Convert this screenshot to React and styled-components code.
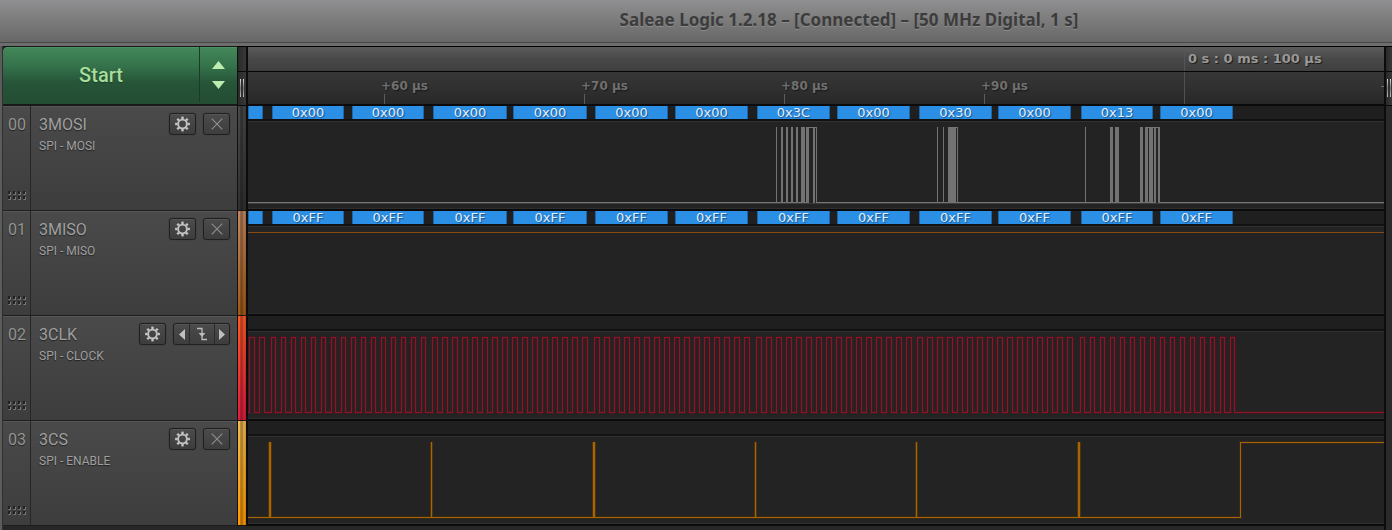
import React from 'react';
import styled, { createGlobalStyle } from 'styled-components';

const GlobalStyle = createGlobalStyle`
  * { box-sizing: border-box; }
  body { margin: 0; background: #272727; }
  button { margin: 0; padding: 0; border: 0; font: inherit; color: inherit; cursor: pointer; }
`;

const Window = styled.div`
  min-height: 100vh;
  display: flex;
  flex-direction: column;
  background: #272727;
  font-family: Roboto, "Liberation Sans", sans-serif;
`;

const TitleBar = styled.header`
  height: 43px;
  padding: 0 0 2px 306px;
  display: flex;
  align-items: center;
  justify-content: center;
  background: linear-gradient(#8f8f91, #676767);
  border-bottom: 1px solid #484848;
`;

const Title = styled.h1`
  margin: 0;
  font: 700 17px/24px "Noto Sans", "Open Sans", sans-serif;
  color: #3c3c3c;
  text-shadow: 0 1px 0 #8c8c8c;
  white-space: nowrap;
`;

const Workspace = styled.main`
  flex: 1;
  display: flex;
  align-items: flex-start;
  border-top: 3px solid #6e6e6e;
`;

const LeftEdge = styled.div`
  width: 3px;
  align-self: stretch;
  background: #5c5c5c;
  border-right: 1px solid #303030;
`;

const Sidebar = styled.section`
  width: 235px;
  flex: none;
  border-top: 1px solid #161616;
  border-right: 1px solid #101010;
`;

const StartBar = styled.div`
  height: 59px;
  padding-bottom: 2px;
  display: flex;
  border-radius: 5px 0 0 0;
  border-bottom: 2px solid #181818;
  overflow: hidden;
  background: linear-gradient(#43885a 0, #34714a 35%, #265538 62%, #244d34 100%);
  box-shadow: inset 0 1px 0 #4f9466;
`;

const StartButton = styled.button`
  flex: 1;
  background: none;
  && {
    border-right: 1px solid #1b3a27;
    color: #a8dc9a;
    font: 500 20px/24px Roboto, sans-serif;
  }
  text-shadow: 0 1px 1px #1c3f2a;
`;

const DurationStepper = styled.div`
  width: 37px;
  display: flex;
  flex-direction: column;
  align-items: center;
  justify-content: center;
`;

const StepButton = styled.button`
  width: 100%;
  height: 20px;
  background: none;
  display: flex;
  align-items: center;
  justify-content: center;
`;

const ChannelRow = styled.article`
  height: 105px;
  display: flex;
  background: linear-gradient(#4a4a4a, #3d3d3d);
  border-bottom: 1px solid #1e1e1e;
  box-shadow: inset 0 1px 0 #575757;
  text-shadow: 0 1px 1px #222;
`;

const IndexColumn = styled.div`
  width: 28px;
  padding: 9px 0 9px 1px;
  display: flex;
  flex-direction: column;
  align-items: center;
  justify-content: space-between;
  border-right: 1px solid #262626;
  color: #949494;
  font-size: 16px;
  line-height: 20px;
`;

const ChannelBody = styled.div`
  flex: 1;
  padding: 7px 7px 0 8px;
  display: flex;
  justify-content: space-between;
  align-items: flex-start;
`;

const ChannelName = styled.h2`
  margin: 2px 0 3px;
  font-size: 16px;
  line-height: 20px;
  font-weight: 400;
  color: #a0a0a0;
`;

const ChannelRole = styled.p`
  margin: 0;
  font-size: 12px;
  line-height: 16px;
  color: #a0a0a0;
  white-space: nowrap;
`;

const Controls = styled.div`
  display: flex;
  gap: 7px;
`;

const bevel = `
  border: 1px solid #202020;
  border-radius: 3px;
  background: linear-gradient(#4b4b4b, #3d3d3d);
  box-shadow: inset 0 1px 0 #555, 0 0 1px #202020;
`;

const IconButton = styled.button`
  width: 27px;
  height: 22px;
  display: flex;
  align-items: center;
  justify-content: center;
  && { ${bevel} }
`;

const TriggerGroup = styled.div`
  width: 57px;
  height: 22px;
  display: flex;
  overflow: hidden;
  ${bevel}
`;

const TriggerButton = styled.button`
  flex: ${(p) => (p.$wide ? '1' : '0 0 15px')};
  display: flex;
  align-items: center;
  justify-content: center;
  background: none;
  & + & { border-left: 1px solid #2a2a2a; }
`;

const Rail = styled.div`
  width: ${(p) => (p.$right ? '8px' : '10px')};
  flex: none;
  border-top: 1px solid #000;
  border-left: ${(p) => (p.$right ? '2px' : '0')} solid #0c0c0c;
  border-right: ${(p) => (p.$right ? '0' : '2px')} solid #0c0c0c;
  align-self: ${(p) => (p.$right ? 'stretch' : 'auto')};
  background: #2b2b2b;
`;

const RailHead = styled.div`
  height: 59px;
  padding-top: 24px;
  background: linear-gradient(90deg, #2a2a2a, #383838);
  border-bottom: 1px solid #080808;
`;

const RailHandle = styled.div`
  height: 33px;
  border-top: 1px solid #080808;
  display: flex;
  align-items: center;
  justify-content: center;
`;

const RailSegment = styled.div`
  height: 105px;
  border-bottom: 1px solid #1c1208;
  background:
    linear-gradient(90deg, transparent 2px, #0003 2px, #0005 4px, #0001 6px, #0003 8px),
    linear-gradient(${(p) => p.$colors});
`;

const Scope = styled.section`
  flex: 1;
  min-width: 0;
  overflow: hidden;
  border-top: 1px solid #000;
`;

const MajorRuler = styled.div`
  height: 25px;
  padding-left: 936px;
  display: flex;
  border-bottom: 1px solid #050505;
  background: linear-gradient(#5c5c5c, #484848 50%, #3f3f3f);
`;

const MajorMark = styled.span`
  padding: 4px 0 0 3px;
  border-left: 1px solid #555;
  color: #999;
  font: 700 13px/16px "DejaVu Sans", sans-serif;
  text-shadow: 1px 1px 1px #1a1a1a;
  white-space: nowrap;
`;

const MinorRuler = styled.div`
  height: 34px;
  padding-left: 133px;
  display: flex;
  background: linear-gradient(#373737, #282828);
  border-bottom: 2px solid #0b0b0b;
`;

const MinorMark = styled.div`
  width: 200px;
  flex: none;
  color: #707070;
  padding-top: 6px;
  font: 700 12px/16px "DejaVu Sans", sans-serif;
  text-shadow: 1px 1px 1px #1a1a1a;
  white-space: nowrap;
  svg { display: block; }
`;

const MajorTick = styled.div`
  width: 197px;
  flex: none;
  margin-left: 3px;
  border-left: 1px solid #505050;
`;

const Lane = styled.div`
  height: 105px;
  display: flex;
  flex-direction: column;
  background: #232323;
  border-bottom: 2px solid #0b0b0b;
`;

const DecodeStrip = styled.ol`
  height: 15px;
  margin: 0;
  padding: 0;
  list-style: none;
  display: flex;
  background: #1f1f1f;
  border-bottom: 2px solid #121212;
`;

const Bubble = styled.li`
  flex: none;
  width: ${(p) => p.$width}px;
  margin-left: ${(p) => p.$gap}px;
  border: solid #1c66ab;
  border-width: 0 1px;
  background: #2b8fe6;
  color: #e4eef8;
  font: 13px/14px "DejaVu Sans", sans-serif;
  text-align: center;
  text-shadow: 1px 1px 1px #13508c;
`;

const Plot = styled.svg`
  display: block;
  width: 100%;
  height: 88px;
  border-top: 1px solid #303030;
  border-bottom: 1px solid #2e2e2e;
`;

const FAR = 6000;
const TOP = 5.5;
const LOW = 80.5;

// Decoded bytes: start and end on the time axis, with the MOSI value.
const bytes = [
  [0, 15, ''], [24, 96, '0x00'], [104, 176, '0x00'], [185, 259, '0x00'],
  [265, 339, '0x00'], [347, 420, '0x00'], [427, 500, '0x00'], [509, 582, '0x3C'],
  [589, 662, '0x00'], [671, 744, '0x30'], [750, 823, '0x00'], [833, 905, '0x13'],
  [912, 985, '0x00'],
];

// Bursts of 16 clock pulses: first rising edge and high time.
const bursts = [[23.5, 4], [184.5, 5], [346.5, 5], [508.5, 5], [669.5, 5], [832.5, 4]];

function clockPath() {
  let d = `M0 ${LOW}H1.5V${TOP}H6.5V${LOW}H11.5V${TOP}H16.5V${LOW}`;
  bursts.forEach(([start, high]) => {
    for (let i = 0; i < 16; i += 1) {
      const x = start + i * 10;
      d += `H${x}V${TOP}H${x + high}V${LOW}`;
    }
  });
  return `${d}H${FAR}`;
}

const mosiBars = [
  [528, 1], [533, 2], [538, 2], [543, 2], [548, 2], [553, 4], [558, 3], [565, 2], [568, 1],
  [689, 1], [695, 1], [700, 8], [709, 1],
  [837, 1], [862, 3], [867, 4], [892, 3], [897, 3], [901, 4], [906, 2], [910, 2],
];

const csSpikes = [[21, 2], [183, 1], [345, 2], [507, 1], [668, 1], [830, 2]];

function MosiPlot() {
  return (
    <Plot shapeRendering="crispEdges" aria-hidden="true">
      <path d={`M0 ${LOW + 1}H${FAR}`} stroke="#3c3c3c" />
      <path d={`M0 ${LOW}H560M569 ${LOW}H906M912 ${LOW}H${FAR}`} stroke="#777" />
      <path d={`M560 ${TOP}H569M704 ${TOP}H710M897 ${TOP}H912`} stroke="#777" />
      {mosiBars.map(([x, w]) => <rect key={x} x={x} y="5" width={w} height="76" fill="#727272" />)}
    </Plot>
  );
}

function MisoPlot() {
  return (
    <Plot shapeRendering="crispEdges" aria-hidden="true">
      <path d={`M0 ${TOP}H${FAR}`} stroke="#8a4a14" />
    </Plot>
  );
}

function ClockPlot() {
  return (
    <Plot shapeRendering="crispEdges" aria-hidden="true">
      <path d={clockPath()} fill="none" stroke="#481820" strokeWidth="3" opacity="0.6" />
      <path d={clockPath()} fill="none" stroke="#8e1426" />
    </Plot>
  );
}

function EnablePlot() {
  const line = `M0 ${LOW}H992.5V${TOP}H${FAR}`;
  return (
    <Plot shapeRendering="crispEdges" aria-hidden="true">
      <path d={line} fill="none" stroke="#3d2c14" strokeWidth="3" opacity="0.6" />
      {csSpikes.map(([x, w]) => (
        <g key={x}>
          <rect x={x - 1} y="5" width={w + 2} height="76" fill="#4a3313" />
          <rect x={x} y="5" width={w} height="76" fill="#a86400" />
        </g>
      ))}
      <path d={line} fill="none" stroke="#a86400" />
    </Plot>
  );
}

const channels = [
  { id: '00', name: '3MOSI', role: 'SPI - MOSI', colors: '#484848, #303030', Wave: MosiPlot, label: (v) => v },
  { id: '01', name: '3MISO', role: 'SPI - MISO', colors: '#c28760, #a05a16', Wave: MisoPlot, label: (v) => v && '0xFF' },
  { id: '02', name: '3CLK', role: 'SPI - CLOCK', colors: '#ff5a26, #e01c40', Wave: ClockPlot, trigger: true },
  { id: '03', name: '3CS', role: 'SPI - ENABLE', colors: '#f0bc50, #ff9800', Wave: EnablePlot },
];

function GearIcon() {
  return (
    <svg width="15" height="16" viewBox="0 0 15 16" fill="none" stroke="#c4c4c4" aria-hidden="true">
      <circle cx="7.5" cy="8" r="4.4" strokeWidth="1.9" />
      {[0, 45, 90, 135, 180, 225, 270, 315].map((a) => (
        <path key={a} d="M7.5 3V.6" strokeWidth="2.4" transform={`rotate(${a} 7.5 8)`} />
      ))}
    </svg>
  );
}

function CloseIcon() {
  return (
    <svg width="12" height="12" viewBox="0 0 12 12" stroke="#8f8f8f" strokeWidth="1.1" aria-hidden="true">
      <path d="M.7.7 11.3 11.3M11.3.7.7 11.3" />
    </svg>
  );
}

function FallingEdgeIcon() {
  return (
    <svg width="12" height="14" viewBox="0 0 12 14" fill="none" stroke="#bcbcbc" strokeWidth="1.3" aria-hidden="true">
      <path d="M1 1.5H6V12.5H11" />
      <path d="M2.6 6H9.4L6 10Z" fill="#bcbcbc" stroke="none" />
    </svg>
  );
}

function Grip() {
  return (
    <svg width="20" height="10" viewBox="0 0 20 10" aria-hidden="true">
      {[1, 6, 11, 16].map((x) => [0, 5].map((y) => (
        <g key={`${x}-${y}`}>
          <path d={`M${x + 0.5} ${y + 3.5}H${x + 2.5}V${y + 1}`} fill="none" stroke="#7c7c7c" />
          <rect x={x} y={y} width="2" height="3" fill="#222" />
        </g>
      )))}
    </svg>
  );
}

function Triangle({ d, fill = '#c0c0c0', width = 6, height = 11 }) {
  return <svg width={width} height={height} aria-hidden="true"><path d={d} fill={fill} /></svg>;
}

function Channel({ id, name, role, trigger }) {
  return (
    <ChannelRow>
      <IndexColumn><span>{id}</span><Grip /></IndexColumn>
      <ChannelBody>
        <div>
          <ChannelName>{name}</ChannelName>
          <ChannelRole>{role}</ChannelRole>
        </div>
        <Controls>
          <IconButton type="button" aria-label={`${name} settings`}><GearIcon /></IconButton>
          {trigger ? (
            <TriggerGroup>
              <TriggerButton type="button" aria-label="Previous edge"><Triangle d="M6 0V11L0 5.5Z" /></TriggerButton>
              <TriggerButton $wide type="button" aria-label="Falling edge trigger"><FallingEdgeIcon /></TriggerButton>
              <TriggerButton type="button" aria-label="Next edge"><Triangle d="M0 0V11L6 5.5Z" /></TriggerButton>
            </TriggerGroup>
          ) : (
            <IconButton type="button" aria-label={`Hide ${name}`}><CloseIcon /></IconButton>
          )}
        </Controls>
      </ChannelBody>
    </ChannelRow>
  );
}

function HandleBars() {
  return (
    <svg width="6" height="18" aria-hidden="true">
      <defs>
        <linearGradient id="bars" x2="0" y2="1">
          <stop stopColor="#ddd" /><stop offset=".5" stopColor="#777" /><stop offset="1" stopColor="#bbb" />
        </linearGradient>
      </defs>
      <rect x="1" width="1" height="18" fill="url(#bars)" />
      <rect x="4" width="1" height="18" fill="url(#bars)" />
    </svg>
  );
}

export default function App() {
  return (
    <Window>
      <GlobalStyle />
      <TitleBar><Title>Saleae Logic 1.2.18 – [Connected] – [50 MHz Digital, 1 s]</Title></TitleBar>
      <Workspace>
        <LeftEdge />
        <Sidebar>
          <StartBar>
            <StartButton type="button">Start</StartButton>
            <DurationStepper>
              <StepButton type="button" aria-label="Increase"><Triangle d="M0 8H13L6.5 0Z" width={13} height={8} fill="#bdecb0" /></StepButton>
              <StepButton type="button" aria-label="Decrease"><Triangle d="M0 0H13L6.5 8Z" width={13} height={8} fill="#bdecb0" /></StepButton>
            </DurationStepper>
          </StartBar>
          {channels.map((c) => <Channel key={c.id} {...c} />)}
        </Sidebar>
        <Rail>
          <RailHead><RailHandle><HandleBars /></RailHandle></RailHead>
          {channels.map((c) => <RailSegment key={c.id} $colors={c.colors} />)}
        </Rail>
        <Scope>
          <MajorRuler><MajorMark>0 s : 0 ms : 100 µs</MajorMark></MajorRuler>
          <MinorRuler>
            {['+60 µs', '+70 µs', '+80 µs', '+90 µs'].map((t) => (
              <MinorMark key={t}>
                {t}
                <svg width="10" height="10"><path d="M3.5 0V10" stroke="#5c5c5c" /></svg>
              </MinorMark>
            ))}
            <MajorTick />
            <svg width="3" height="32" aria-hidden="true"><path d="M0 14.5H3" stroke="#707070" /></svg>
          </MinorRuler>
          {channels.map(({ id, Wave, label }) => (
            <Lane key={id}>
              <DecodeStrip>
                {label && bytes.map(([start, end, value], i) => (
                  <Bubble key={start} $width={end - start} $gap={i ? start - bytes[i - 1][1] : 0}>{label(value)}</Bubble>
                ))}
              </DecodeStrip>
              <Wave />
            </Lane>
          ))}
        </Scope>
        <Rail $right>
          <RailHead><RailHandle><HandleBars /></RailHandle></RailHead>
        </Rail>
      </Workspace>
    </Window>
  );
}
